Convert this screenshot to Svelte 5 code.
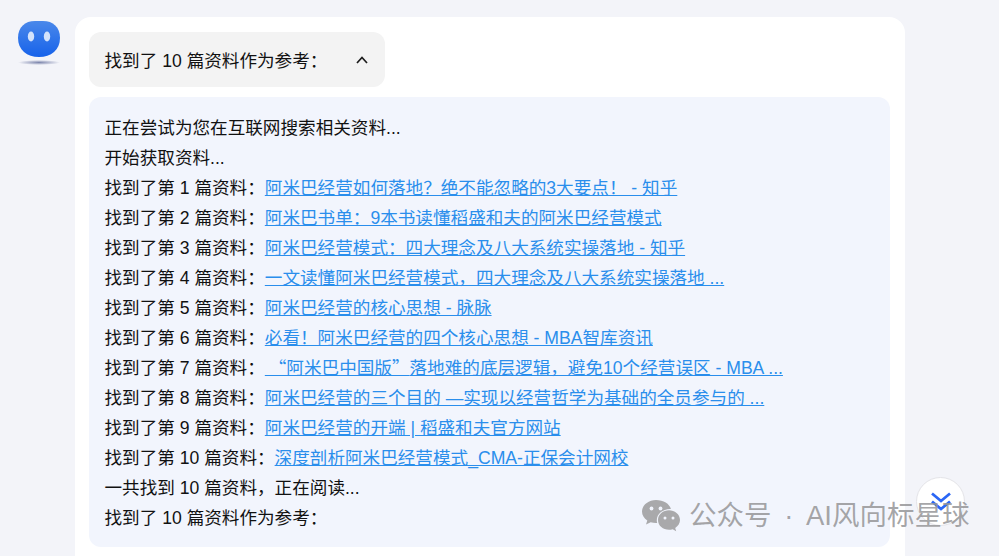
<script lang="ts">
  type Item = { label: string; quoted?: string; title: string };

  const items: Item[] = [
    { label: '找到了第 1 篇资料：', title: '阿米巴经营如何落地？绝不能忽略的3大要点！ - 知乎' },
    { label: '找到了第 2 篇资料：', title: '阿米巴书单：9本书读懂稻盛和夫的阿米巴经营模式' },
    { label: '找到了第 3 篇资料：', title: '阿米巴经营模式：四大理念及八大系统实操落地 - 知乎' },
    { label: '找到了第 4 篇资料：', title: '一文读懂阿米巴经营模式，四大理念及八大系统实操落地 ...' },
    { label: '找到了第 5 篇资料：', title: '阿米巴经营的核心思想 - 脉脉' },
    { label: '找到了第 6 篇资料：', title: '必看！阿米巴经营的四个核心思想 - MBA智库资讯' },
    { label: '找到了第 7 篇资料：', quoted: '\u00a0“阿米巴中国版”', title: '落地难的底层逻辑，避免10个经营误区 - MBA ...' },
    { label: '找到了第 8 篇资料：', title: '阿米巴经营的三个目的 —实现以经营哲学为基础的全员参与的 ...' },
    { label: '找到了第 9 篇资料：', title: '阿米巴经营的开端 | 稻盛和夫官方网站' },
    { label: '找到了第 10 篇资料：', title: '深度剖析阿米巴经营模式_CMA-正保会计网校' }
  ];
</script>

<div class="page">
  <div class="avatar">
    <svg width="46" height="46" viewBox="0 0 46 46">
      <defs>
        <linearGradient id="face" x1="0" y1="0" x2="0" y2="1">
          <stop offset="0" stop-color="#4a88ea" />
          <stop offset="1" stop-color="#1662ea" />
        </linearGradient>
        <radialGradient id="shade">
          <stop offset="0" stop-color="#7d86ad" />
          <stop offset="1" stop-color="#f3f4f9" />
        </radialGradient>
      </defs>
      <ellipse cx="22" cy="41.500" rx="21" ry="2.500" fill="url(#shade)" />
      <path d="M1 17C1 6 8 0 18 0h8c10 0 17 6 17 17 0 12-9 19-21 19S1 29 1 17z" fill="url(#face)" />
      <ellipse cx="14" cy="15.500" rx="3.200" ry="5" fill="#d4e3fb" />
      <ellipse cx="30" cy="15.500" rx="3.200" ry="5" fill="#d4e3fb" />
    </svg>
  </div>

  <div class="card">
    <div class="summary">
      <span>找到了 10 篇资料作为参考：</span>
      <svg width="12" height="8" viewBox="0 0 12 8" fill="none">
        <path d="M1 7l5-5.500L11 7" stroke="#1c1c1c" stroke-width="1.700" />
      </svg>
    </div>

    <div class="log">
      <p>正在尝试为您在互联网搜索相关资料...</p>
      <p>开始获取资料...</p>
      {#each items as item}
        <p>{item.label}<a href="#top">{#if item.quoted}<span class="cjk">{item.quoted}</span>{/if}{item.title}</a></p>
      {/each}
      <p>一共找到 10 篇资料，正在阅读...</p>
      <p>找到了 10 篇资料作为参考：</p>
    </div>
  </div>
</div>

<button class="to-bottom" aria-label="scroll to bottom">
  <svg width="20" height="20" viewBox="0 0 20 20" fill="none">
    <path d="M1 1.500l9 7.500 9-7.500M1 9.500l9 7.500 9-7.500" stroke="#2a66f5" stroke-width="2.800" />
  </svg>
</button>

<div class="watermark">
  <svg width="38" height="32" viewBox="0 0 38 32">
    <path d="M14 0C6.300 0 0 5.200 0 11.600c0 3.700 2.100 6.800 5.300 9l-1.300 4 4.700-2.400c1.700.5 3.400.8 5.300.8h1.200a10 10 0 0 1-.4-2.800C14.800 14 20.700 9 28 9h.9C27.600 3.800 21.400 0 14 0z" fill="#a9a9ab" />
    <path d="M38 20c0-5.900-5.500-9.800-11-9.800-5.900 0-11 4-11 9.800s5.100 9.800 11 9.800c1.300 0 2.500-.2 3.700-.6l3.500 2-1-3.200c3-2 4.800-4.700 4.800-8z" fill="#a9a9ab" />
    <circle cx="9.500" cy="8.500" r="1.900" fill="#f1f4fc" />
    <circle cx="18.500" cy="8.500" r="1.900" fill="#f1f4fc" />
    <circle cx="23" cy="18" r="1.500" fill="#f1f4fc" />
    <circle cx="31" cy="18" r="1.500" fill="#f1f4fc" />
  </svg>
  <span>公众号 · AI风向标星球</span>
</div>

<style>
  :global(body) {
    margin: 0;
    background: #f3f4f9;
    overflow: hidden;
  }

  .page {
    display: flex;
    align-items: flex-start;
    gap: 12px;
    height: 556px;
    box-sizing: border-box;
    padding: 17px 0 0 17px;
    overflow: hidden;
    font-family: 'Liberation Sans', 'Noto Sans CJK SC', sans-serif;
    font-size: 17.6px;
    color: #111;
  }

  .avatar {
    width: 46px;
    height: 46px;
    padding-top: 4px;
    flex: none;
  }

  .card {
    width: 830px;
    flex: none;
    box-sizing: border-box;
    min-height: 560px;
    padding: 15px 15px 15px 14px;
    background: #fff;
    border-radius: 16px;
  }

  .summary {
    display: flex;
    align-items: center;
    justify-content: space-between;
    width: 296px;
    height: 55px;
    box-sizing: border-box;
    padding: 0 17px 0 15.500px;
    background: #f3f3f3;
    border-radius: 12px;
  }

  .log {
    margin-top: 10px;
    height: 450px;
    box-sizing: border-box;
    padding: 16px 15.500px;
    background: #f2f5fd;
    border-radius: 12px;
  }

  p {
    margin: 0;
    height: 30px;
    line-height: 30px;
    white-space: nowrap;
  }

  a {
    color: #2a8eec;
  }

  .cjk {
    font-family: 'Noto Sans CJK SC', sans-serif;
    line-height: 0;
  }

  .to-bottom {
    position: absolute;
    left: 916px;
    top: 477px;
    width: 49px;
    height: 49px;
    padding: 0;
    display: flex;
    align-items: center;
    justify-content: center;
    background: #fff;
    border: 1px solid #e4e4e8;
    border-radius: 50%;
  }

  .watermark {
    position: absolute;
    left: 642px;
    top: 499px;
    display: flex;
    align-items: center;
    gap: 9px;
    font-family: 'Liberation Sans', 'Noto Sans CJK SC', sans-serif;
    font-size: 27.5px;
    word-spacing: 5px;
    line-height: 34px;
    color: rgba(150, 150, 152, 0.85);
    white-space: nowrap;
  }
</style>
